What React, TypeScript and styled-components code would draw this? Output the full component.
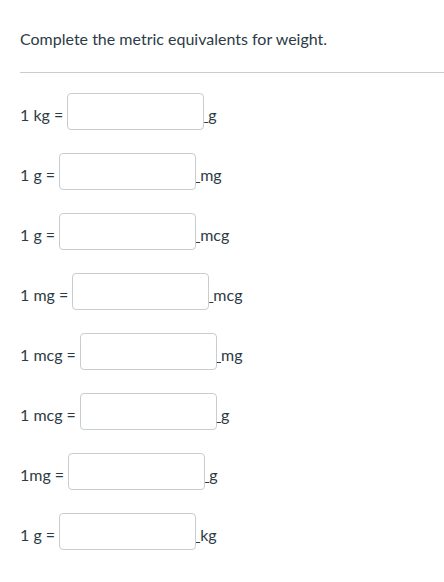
import React from 'react';
import styled, { createGlobalStyle } from 'styled-components';

const GlobalStyle = createGlobalStyle`
  body {
    margin: 0;
    background: #ffffff;
    font-family: Lato, "Noto Sans", sans-serif;
    color: #2d3b45;
  }
`;

const Page = styled.div`
  padding-left: 20px;
  padding-bottom: 20px;
`;

const Title = styled.div`
  margin-top: 27px;
  font-size: 16px;
  line-height: 24px;
`;

const Divider = styled.hr`
  margin: 21px 0 0 0;
  border: none;
  border-top: 1px solid #c7cdd1;
  height: 0;
`;

const Rows = styled.div`
  display: flex;
  flex-direction: column;
  gap: 23px;
  margin-top: 20px;
`;

const Row = styled.div`
  display: flex;
  align-items: flex-end;
  font-size: 16px;
  line-height: 20px;
`;

const Label = styled.span`
  margin-bottom: 5px;
  margin-right: 4px;
  white-space: pre;
`;

const AnswerBox = styled.input`
  box-sizing: border-box;
  width: 137px;
  height: 37px;
  border: 1px solid #c7cdd1;
  border-radius: 4px;
  background: #fff;
  font-family: inherit;
  font-size: 16px;
  padding: 0 8px;
  outline: none;
`;

const Unit = styled.span`
  margin-bottom: 5px;
  white-space: pre;
`;

const Blank = styled.span`
  text-decoration: underline;
  text-decoration-thickness: 1px;
`;

const rows = [
  { label: '1 kg =', unit: 'g' },
  { label: '1 g =', unit: 'mg' },
  { label: '1 g =', unit: 'mcg' },
  { label: '1 mg =', unit: 'mcg' },
  { label: '1 mcg =', unit: 'mg' },
  { label: '1 mcg =', unit: 'g' },
  { label: '1mg =', unit: 'g' },
  { label: '1 g =', unit: 'kg' },
];

export default function App() {
  return (
    <Page>
      <GlobalStyle />
      <Title>Complete the metric equivalents for weight.</Title>
      <Divider />
      <Rows>
        {rows.map((r, i) => (
          <Row key={i}>
            <Label>{r.label}</Label>
            <AnswerBox type="text" aria-label={r.label} />
            <Unit>
              <Blank>{'\u00a0'}</Blank>
              {r.unit}
            </Unit>
          </Row>
        ))}
      </Rows>
    </Page>
  );
}
